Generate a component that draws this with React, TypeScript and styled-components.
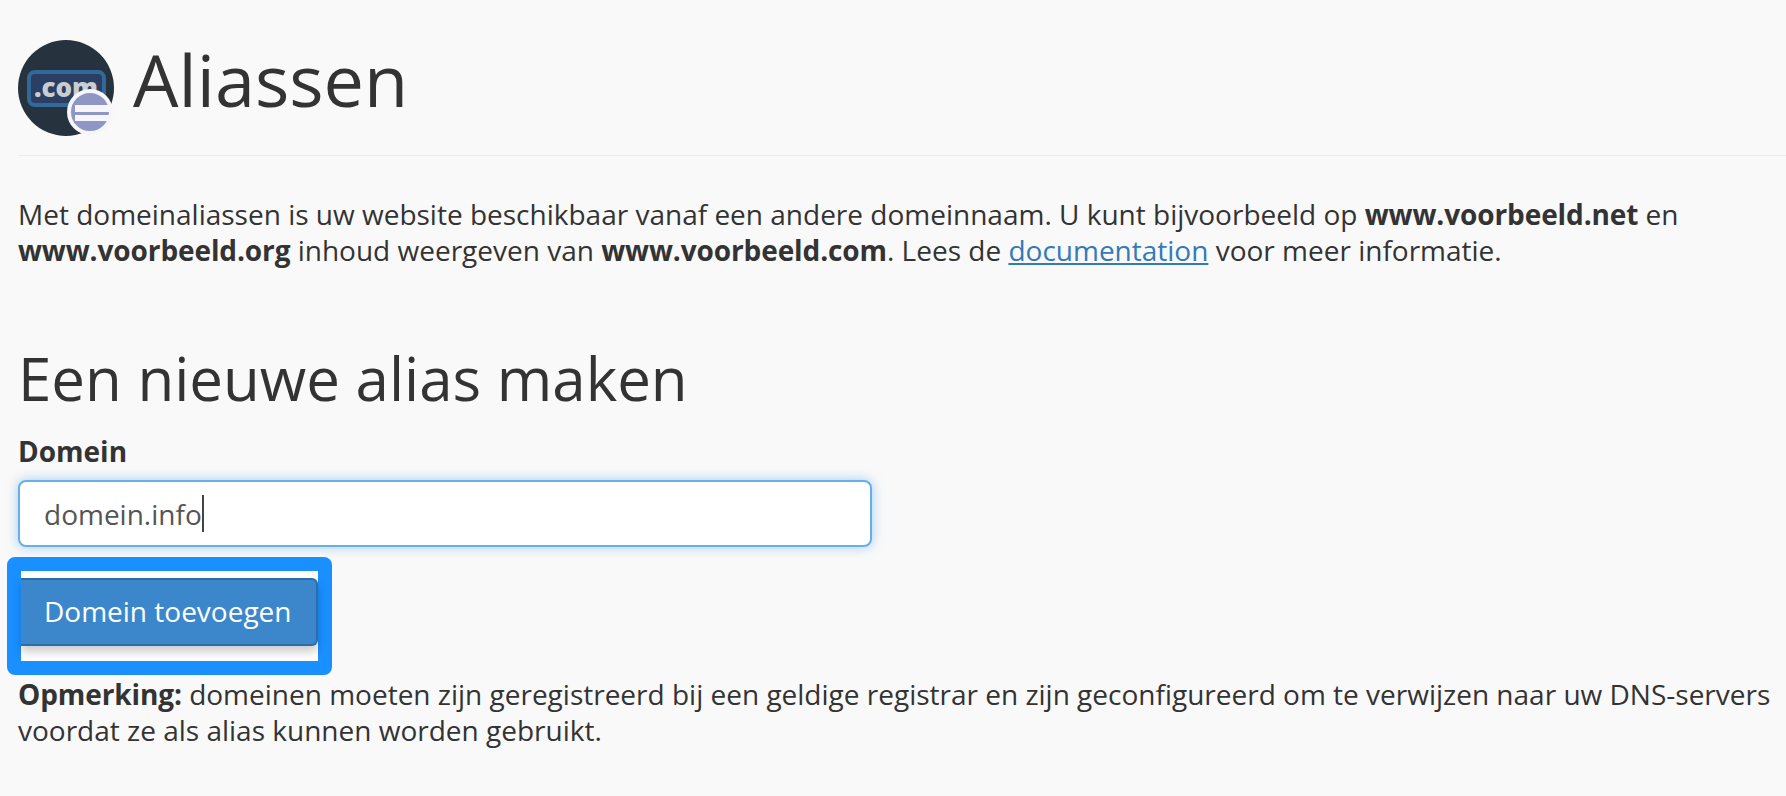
import React from 'react'
import styled, { createGlobalStyle } from 'styled-components'

const GlobalStyle = createGlobalStyle`
    html, body {
        margin: 0;
        background: #f9f9f9;
        color: #333;
        font-family: "Open Sans", "Noto Sans", sans-serif;
        overflow: hidden;
    }
    b {
        letter-spacing: -0.1px;
    }
`

const Page = styled.div`
    height: 796px;
    padding: 40px 0 0 18px;
    box-sizing: border-box;
`

const Header = styled.header`
    display: flex;
    align-items: center;
    gap: 19px;
    height: 96px;
    padding-bottom: 19px;
    border-bottom: 1px solid #ececec;
`

const Title = styled.h1`
    margin: 0 0 18px;
    font-size: 72px;
    font-weight: 400;
    line-height: 96px;
    color: #333;
`

const Intro = styled.p`
    margin: 40px 0 0;
    width: 1700px;
    font-size: 28px;
    line-height: 36px;
`

const DocLink = styled.a`
    color: #337ab7;
    text-decoration: underline;
`

const SectionTitle = styled.h2`
    margin: 72px 0 0;
    font-size: 60px;
    font-weight: 400;
    line-height: 76px;
    color: #333;
`

const Label = styled.label`
    display: block;
    margin-top: 17px;
    font-size: 28px;
    font-weight: 700;
    line-height: 36px;
`

const InputBox = styled.div`
    display: flex;
    align-items: center;
    box-sizing: border-box;
    width: 854px;
    height: 67px;
    margin-top: 11px;
    padding: 0 24px;
    background: #fff;
    border: 2px solid #66afe9;
    border-radius: 8px;
    box-shadow: 0 0 12px rgba(102, 175, 233, 0.6);
    font-size: 28px;
    color: #555;
`

const Caret = styled.span`
    width: 2px;
    height: 37px;
    background: #444;
`

const FocusFrame = styled.div`
    box-sizing: border-box;
    width: 325px;
    height: 118px;
    margin: 10px 0 0 -11px;
    padding: 7px 0 0;
    background: #fff;
    border: 14px solid #1a8fff;
    border-radius: 8px;
`

const AddButton = styled.button`
    display: block;
    box-sizing: border-box;
    width: 100%;
    height: 68px;
    padding: 0 0 2px 23px;
    background: #3c87cc;
    border: 2px solid #2e6da4;
    border-left: 0;
    border-radius: 0 6px 6px 0;
    box-shadow: 0 6px 10px rgba(0, 0, 0, 0.2);
    color: #fff;
    font-family: inherit;
    font-size: 28px;
    text-align: left;
`

const Note = styled.p`
    margin: 1px 0 0;
    width: 1760px;
    font-size: 28px;
    line-height: 36px;
`

const DomainIcon = () => (
    <svg width="96" height="96" viewBox="0 0 96 96" style={{ flexShrink: 0 }}>
        <defs>
            <clipPath id="badge">
                <circle cx="72" cy="72" r="21" />
            </clipPath>
        </defs>
        <circle cx="48" cy="48" r="48" fill="#26323d" />
        <rect x="11" y="32" width="75" height="33" rx="6" fill="#2b3f63" stroke="#33699a" strokeWidth="4" />
        <text x="48" y="57" textAnchor="middle" fontFamily="'Open Sans', sans-serif" fontWeight="800" fontSize="26" fill="#c9cdd0">.com</text>
        <circle cx="72" cy="72" r="21" fill="#8e97c4" stroke="#f6f6f8" strokeWidth="4" />
        <g clipPath="url(#badge)">
            <rect x="57" y="65" width="34" height="7" fill="#f6f6f8" />
            <rect x="57" y="75" width="34" height="6" fill="#f6f6f8" />
        </g>
    </svg>
)

const App: React.FC = () => {
    return (
        <Page>
            <GlobalStyle />
            <Header>
                <DomainIcon />
                <Title>Aliassen</Title>
            </Header>
            <Intro>
                Met domeinaliassen is uw website beschikbaar vanaf een andere domeinnaam. U kunt bijvoorbeeld op <b>www.voorbeeld.net</b> en <b>www.voorbeeld.org</b> inhoud weergeven van <b>www.voorbeeld.com</b>. Lees de <DocLink href="#">documentation</DocLink> voor meer informatie.
            </Intro>
            <SectionTitle>Een nieuwe alias maken</SectionTitle>
            <Label>Domein</Label>
            <InputBox>
                domein.info
                <Caret />
            </InputBox>
            <FocusFrame>
                <AddButton>Domein toevoegen</AddButton>
            </FocusFrame>
            <Note>
                <b>Opmerking:</b> domeinen moeten zijn geregistreerd bij een geldige registrar en zijn geconfigureerd om te verwijzen naar uw DNS-servers voordat ze als alias kunnen worden gebruikt.
            </Note>
        </Page>
    )
}

export default App
